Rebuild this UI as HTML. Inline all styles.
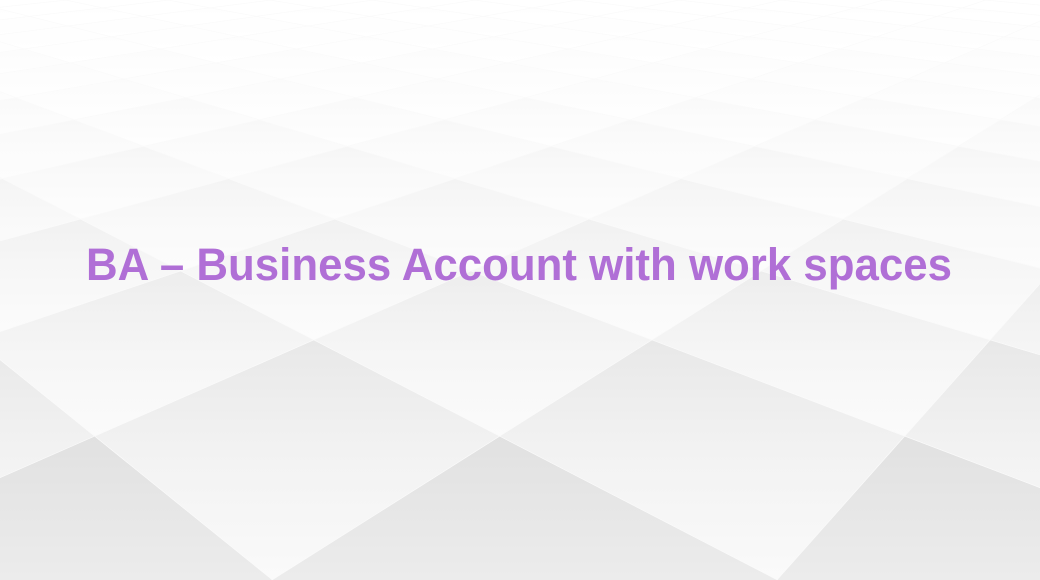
<!DOCTYPE html>
<html><head><meta charset="utf-8"><style>
html,body{margin:0;padding:0;background:#fff;overflow:hidden;}
svg{display:block}
</style></head><body>
<svg id="s" width="1040" height="580" viewBox="0 0 1040 580" xmlns="http://www.w3.org/2000/svg">
<defs></defs>
<rect width="1040" height="580" fill="#ffffff"/>
<g id="g"></g>
<text x="86" y="280" textLength="866" lengthAdjust="spacingAndGlyphs" font-family="'Liberation Sans', sans-serif" font-weight="bold" font-size="45" fill="#b06fd6">BA – Business Account with work spaces</text>
</svg>
<script>
(function(){
var g=document.getElementById('g'),ns='http://www.w3.org/2000/svg',defs=document.querySelector('defs');
var cx=398,a=-0.249;
function Y(k){return 1/(0.001376+0.000339*k)-147;}
function P(u,k){var y=Y(k);var s=0.6946*(y+147);return [cx+s*u,y];}
var html='',gi=0,dh='';
for(var k=-3;k<=24;k++){
  for(var n=-60;n<=60;n++){
    var u=a+n+0.5*k;
    var b=P(u,k),l=P(u-0.5,k+1),r=P(u+0.5,k+1),t=P(u,k+2);
    if(r[0]<-20||l[0]>1060)continue;
    if(t[1]>600)continue;
    var f=Math.max(0,Math.min(1,(t[1]+10)/440));
    f=Math.pow(f,1.2);
    var top=Math.round(255-30*f), bot=Math.round(255-7*f), mid=Math.round(255-17*f);
    var id='d'+(gi++);
    dh+='<linearGradient id="'+id+'" gradientUnits="userSpaceOnUse" x1="0" y1="'+t[1]+'" x2="0" y2="'+b[1]+'"><stop offset="0" stop-color="rgb('+top+','+top+','+top+')"/><stop offset="0.45" stop-color="rgb('+mid+','+mid+','+mid+')"/><stop offset="1" stop-color="rgb('+bot+','+bot+','+bot+')"/></linearGradient>';
    html+='<polygon points="'+t.join(',')+' '+l.join(',')+' '+b.join(',')+' '+r.join(',')+'" fill="url(#'+id+')" stroke="rgb(250,250,250)" stroke-width="0.6"/>';
  }
}
var tmp=document.createElementNS(ns,'svg');
tmp.innerHTML='<defs>'+dh+'</defs><g>'+html+'</g>';
var d0=tmp.firstChild;
while(d0.firstChild)defs.appendChild(d0.firstChild);
var gg=tmp.lastChild;
while(gg.firstChild)g.appendChild(gg.firstChild);
})();
</script>
</body></html>
